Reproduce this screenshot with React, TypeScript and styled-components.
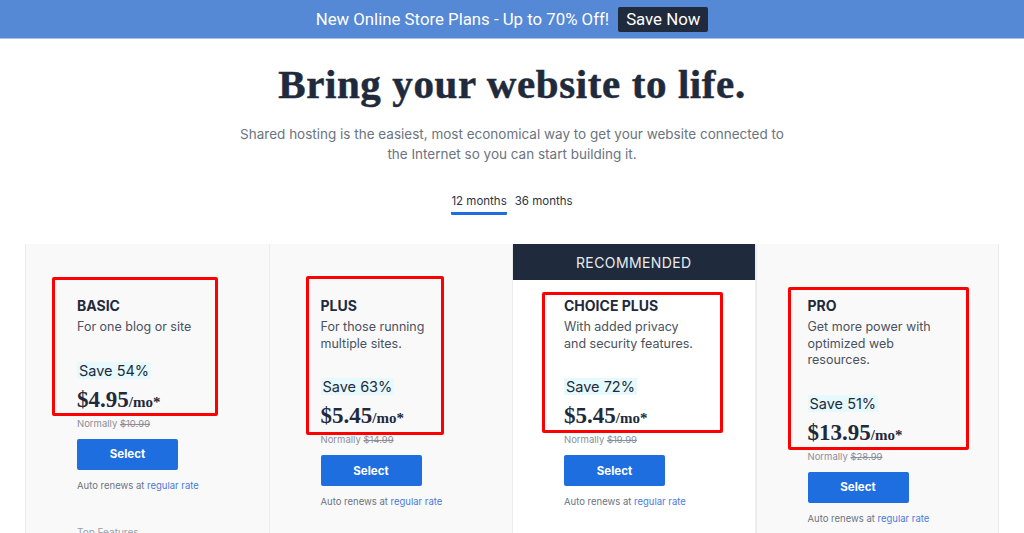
import React from "react";
import styled, { createGlobalStyle } from "styled-components";

const Global = createGlobalStyle`
  html, body { margin: 0; padding: 0; background: #fff; }
  body { font-family: Inter, "Noto Sans", sans-serif; color: #1f2a3c; overflow: hidden; height: 533px; }
  * { box-sizing: border-box; }
`;

const Banner = styled.div`
  height: 39px;
  background: #5588d5;
  border-bottom: 1px solid #a8c2ea;
  display: flex;
  align-items: center;
  justify-content: center;
  gap: 9px;
  font-family: Roboto, "Liberation Sans", sans-serif;
  font-size: 16.8px;
  color: #fff;
`;

const BannerButton = styled.span`
  background: #1f2a3c;
  color: #fff;
  padding: 3px 8px 4px;
  border-radius: 2px;
  line-height: 18px;
`;

const Hero = styled.section`
  display: flex;
  flex-direction: column;
  align-items: center;
  padding-top: 21px;
`;

const Title = styled.h1`
  margin: 0;
  font-family: "Liberation Serif", serif;
  font-weight: 700;
  font-size: 41px;
  line-height: 48px;
  color: #1f2a3c;
  letter-spacing: 0.6px;
  -webkit-text-stroke: 0.5px #1f2a3c;
`;

const Subtitle = styled.p`
  margin: 16px 0 0;
  width: 560px;
  text-align: center;
  font-size: 13.5px;
  line-height: 20px;
  color: #6b7480;
`;

const Tabs = styled.div`
  display: flex;
  gap: 8px;
  margin-top: 29px;
`;

const Tab = styled.span<{ $active?: boolean }>`
  font-size: 11.5px;
  line-height: 16px;
  color: #2b3444;
  padding-bottom: 3px;
  border-bottom: 3px solid ${(p) => (p.$active ? "#1e6ee0" : "transparent")};
  border-radius: 1px;
`;

const Grid = styled.div`
  display: grid;
  grid-template-columns: repeat(4, 1fr);
  margin: 29px 25px 0;
`;

const Card = styled.div<{ $featured?: boolean }>`
  position: relative;
  background: ${(p) => (p.$featured ? "#fff" : "#f9f9fa")};
  border-left: 1px solid #ececee;
  border-right: ${(p) => (p.$featured ? "1px solid #ececee" : "none")};
  &:last-child { border-right: 1px solid #ececee; }
  height: 300px;
`;

const CardHeader = styled.div<{ $show?: boolean }>`
  height: 36px;
  background: ${(p) => (p.$show ? "#1f2a3c" : "transparent")};
  color: #e8ebf0;
  font-size: 14px;
  letter-spacing: 0.4px;
  display: flex;
  align-items: center;
  justify-content: center;
`;

const CardBody = styled.div`
  padding: 17px 0 0 51px;
  display: flex;
  flex-direction: column;
  align-items: flex-start;
`;

const PlanName = styled.div`
  font-size: 14px;
  font-weight: 700;
  line-height: 18px;
  color: #1f2a3c;
`;

const Desc = styled.div`
  margin-top: 4px;
  font-size: 12.5px;
  line-height: 16.5px;
  color: #4a5260;
`;

const Save = styled.div`
  margin-top: 26px;
  background: #e6f9fd;
  font-size: 14.5px;
  line-height: 17px;
  padding: 0 2px;
  color: #1f2a3c;
`;

const Price = styled.div`
  margin-top: 8px;
  font-family: "Liberation Serif", serif;
  font-weight: 700;
  font-size: 23px;
  line-height: 26px;
  color: #1f2a3c;
`;

const Per = styled.span`
  font-size: 15px;
`;

const Normally = styled.div`
  margin-top: 3px;
  font-size: 9.5px;
  line-height: 12px;
  color: #8a8f99;
  s { text-decoration: line-through; }
`;

const SelectButton = styled.div`
  margin-top: 9px;
  width: 101px;
  height: 31px;
  background: #1e6ee0;
  border-radius: 2px;
  color: #fff;
  font-weight: 700;
  font-size: 11.5px;
  display: flex;
  align-items: center;
  justify-content: center;
`;

const Renews = styled.div`
  margin-top: 10px;
  font-size: 9.5px;
  line-height: 12px;
  color: #6b7480;
  a { color: #4a7bd8; text-decoration: none; }
`;

const Features = styled.div`
  margin-top: 34px;
  font-size: 10px;
  color: #9aa0a8;
`;

const Annotation = styled.div`
  position: absolute;
  border: 3px solid #f00;
  border-radius: 2px;
  pointer-events: none;
`;

type Plan = {
  name: string;
  desc: string[];
  save: string;
  price: string;
  normal: string;
  featured?: boolean;
  box: { left: number; top: number; width: number; height: number };
};

const plans: Plan[] = [
  { name: "BASIC", desc: ["For one blog or site"], save: "Save 54%", price: "$4.95", normal: "$10.99", box: { left: 26, top: 33, width: 166, height: 139 } },
  { name: "PLUS", desc: ["For those running", "multiple sites."], save: "Save 63%", price: "$5.45", normal: "$14.99", box: { left: 36, top: 32, width: 138, height: 159 } },
  { name: "CHOICE PLUS", desc: ["With added privacy", "and security features."], save: "Save 72%", price: "$5.45", normal: "$19.99", featured: true, box: { left: 29, top: 48, width: 181, height: 141 } },
  { name: "PRO", desc: ["Get more power with", "optimized web", "resources."], save: "Save 51%", price: "$13.95", normal: "$28.99", box: { left: 31, top: 43, width: 181, height: 163 } },
];

export default function App() {
  return (
    <>
      <Global />
      <Banner>
        <span>New Online Store Plans - Up to 70% Off!</span>
        <BannerButton>Save Now</BannerButton>
      </Banner>
      <Hero>
        <Title>Bring your website to life.</Title>
        <Subtitle>
          Shared hosting is the easiest, most economical way to get your website connected to the Internet so you can start building it.
        </Subtitle>
        <Tabs>
          <Tab $active>12 months</Tab>
          <Tab>36 months</Tab>
        </Tabs>
      </Hero>
      <Grid>
        {plans.map((p) => (
          <Card key={p.name} $featured={p.featured}>
            <CardHeader $show={p.featured}>{p.featured ? "RECOMMENDED" : null}</CardHeader>
            <CardBody>
              <PlanName>{p.name}</PlanName>
              <Desc>
                {p.desc.map((d, i) => (
                  <React.Fragment key={i}>
                    {i > 0 && <br />}
                    {d}
                  </React.Fragment>
                ))}
              </Desc>
              <Save>{p.save}</Save>
              <Price>
                {p.price}
                <Per>/mo*</Per>
              </Price>
              <Normally>
                Normally <s>{p.normal}</s>
              </Normally>
              <SelectButton>Select</SelectButton>
              <Renews>
                Auto renews at <a href="#">regular rate</a>
              </Renews>
              <Features>Top Features</Features>
            </CardBody>
            <Annotation style={p.box} />
          </Card>
        ))}
      </Grid>
    </>
  );
}
